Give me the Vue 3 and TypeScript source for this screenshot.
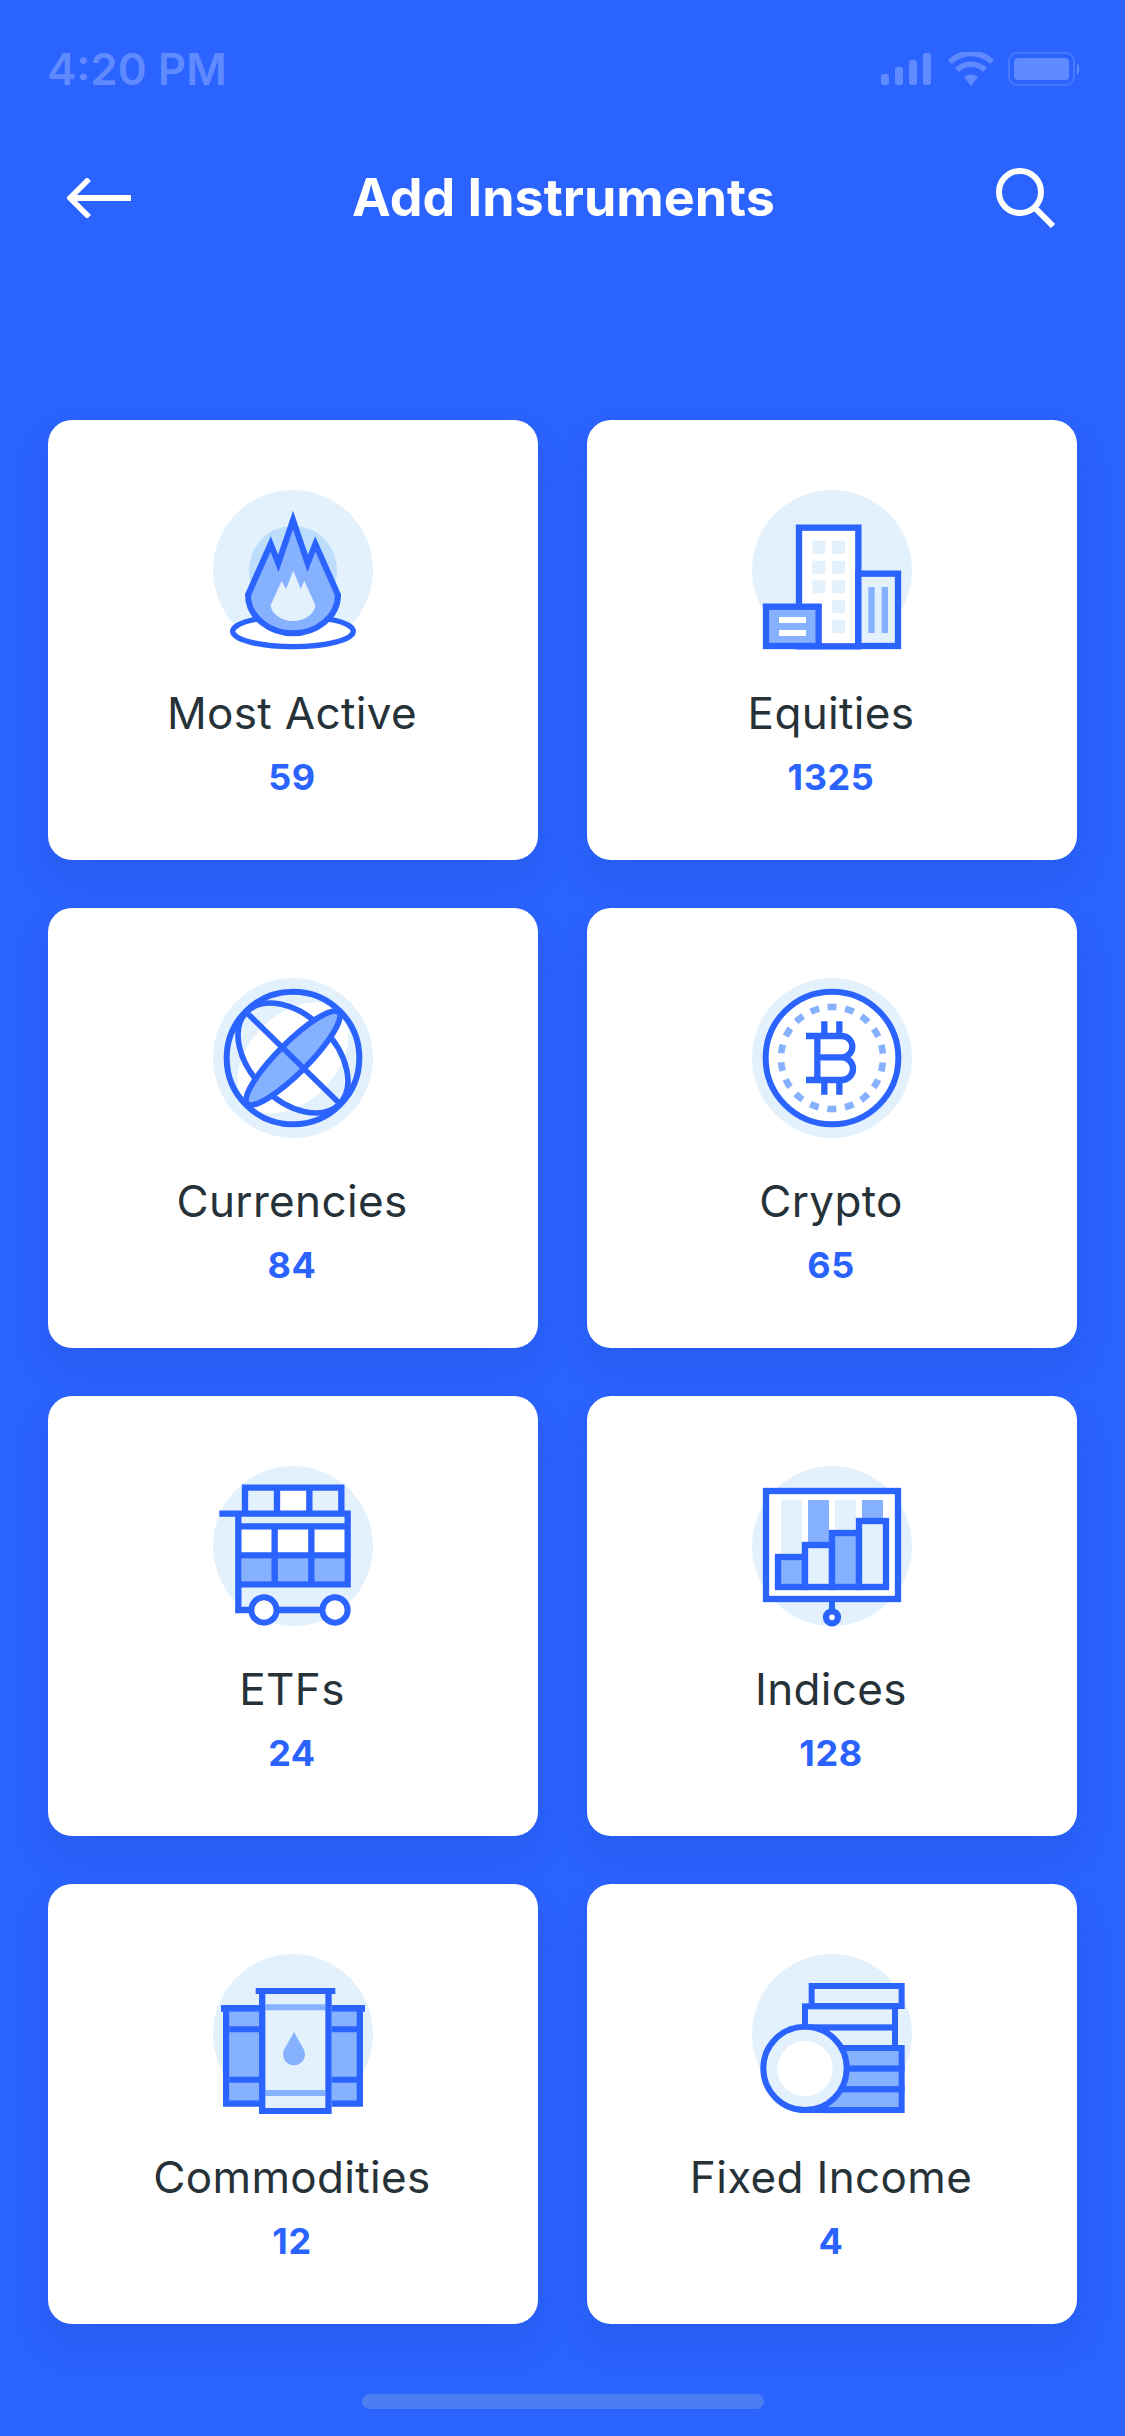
<script setup lang="ts">
interface Item {
  key: string
  name: string
  count: string
}
const items: Item[] = [
  { key: 'fire', name: 'Most Active', count: '59' },
  { key: 'city', name: 'Equities', count: '1325' },
  { key: 'globe', name: 'Currencies', count: '84' },
  { key: 'btc', name: 'Crypto', count: '65' },
  { key: 'cart', name: 'ETFs', count: '24' },
  { key: 'chart', name: 'Indices', count: '128' },
  { key: 'oil', name: 'Commodities', count: '12' },
  { key: 'coins', name: 'Fixed Income', count: '4' },
]
// Each icon is drawn in its own 600x570 space; the box is nudged per grid cell.
function viewBox(i: number): string {
  const x = i % 2 === 0 ? 9 : 6
  const y = -6 * Math.floor(i / 2)
  return `${x} ${y} 600 570`
}
</script>

<template>
  <div class="page">
    <div class="status">
      <span class="time">4:20 PM</span>
      <svg class="status-icons" width="200" height="36" viewBox="0 0 200 36">
        <g fill="#fff" fill-opacity=".25">
          <rect x="0" y="22" width="8" height="11" rx="2.5" />
          <rect x="14" y="15" width="8" height="18" rx="2.5" />
          <rect x="28" y="8" width="8" height="25" rx="2.5" />
          <rect x="42" y="1" width="8" height="32" rx="2.5" />
          <path d="M90 34 L83 25 A 11 11 0 0 1 97 25 Z" />
          <rect x="133" y="6" width="55" height="22" rx="4" />
          <path d="M196 11 C199 13 199 21 196 23 Z" />
        </g>
        <g fill="none" stroke="#fff" stroke-opacity=".25">
          <path d="M76 18 A 20 20 0 0 1 104 18" stroke-width="5.5" />
          <path d="M69 10 A 30 30 0 0 1 111 10" stroke-width="5.5" />
        </g>
        <rect x="128" y="1" width="65" height="32" rx="8" fill="none" stroke="#fff" stroke-opacity=".13" stroke-width="2" />
      </svg>
    </div>

    <div class="nav">
      <svg class="back" width="64" height="40" viewBox="0 0 64 40" fill="none" stroke="#fff">
        <path d="M64 20 H3" stroke-width="6" />
        <path d="M22 1 L3 20 L22 39" stroke-width="5.5" />
      </svg>
      <h1 class="title">Add Instruments</h1>
      <svg class="search" width="60" height="60" viewBox="0 0 60 60" fill="none" stroke="#fff">
        <circle cx="24" cy="24" r="21" stroke-width="6" />
        <path d="M39 40 L57 58" stroke-width="6" />
      </svg>
    </div>

    <div class="grid">
      <div v-for="(item, i) in items" :key="item.key" class="card">
        <svg class="icon" width="200" height="190" :viewBox="viewBox(i)">
          <g v-if="item.key === 'fire'">
            <circle class="l" cx="309" cy="300" r="240" />
            <circle cx="309" cy="300" r="132" fill="#BCDDFB" />
            <ellipse cx="309" cy="484" rx="181" ry="46" fill="#fff" stroke="#2B63FF" stroke-width="16" />
            <path class="m s" stroke-width="18" stroke-miterlimit="10" d="M309 150 L353 280 L376 222 L444 375 C444 440 380 490 309 490 C238 490 174 440 174 375 L242 222 L265 280 Z" />
            <path class="l" d="M310 302 L332 357 L343 333 L376 405 C376 430 345 453 309 453 C275 453 242 430 242 405 L275 333 L288 357 Z" />
          </g>

          <g v-else-if="item.key === 'city'">
            <circle class="l" cx="306" cy="300" r="240" />
            <rect class="s" x="207" y="173" width="178" height="356" fill="#fff" stroke-width="19" />
            <path class="l" d="M247 212h39v39h-39z M306 212h39v39h-39z M247 272h39v39h-39z M306 272h39v39h-39z M247 331h39v39h-39z M306 331h39v39h-39z M306 390h39v39h-39z M306 450h39v39h-39z" />
            <rect class="l s" x="385" y="311" width="119" height="217" stroke-width="19" />
            <path class="m" d="M415 351h19v138h-19z M455 351h19v138h-19z" />
            <rect class="m s" x="108" y="410" width="158" height="118" stroke-width="19" />
            <path fill="#fff" d="M147 441h81v18h-81z M147 480h81v18h-81z" />
          </g>

          <g v-else-if="item.key === 'globe'">
            <circle class="l" cx="309" cy="294" r="240" />
            <g transform="rotate(-45 309 294)">
              <ellipse cx="309" cy="294" rx="196" ry="130" fill="#fff" />
            </g>
            <circle cx="309" cy="294" r="199" fill="none" stroke="#2B63FF" stroke-width="18" />
            <ellipse class="s" cx="309" cy="294" rx="196" ry="126" fill="none" stroke-width="17" transform="rotate(45 309 294)" />
            <ellipse class="m s" cx="309" cy="294" rx="194" ry="46" stroke-width="17" transform="rotate(-45 309 294)" />
            <path class="s" fill="none" stroke-width="17" d="M168 156 L448 430" />
          </g>

          <g v-else-if="item.key === 'btc'">
            <circle class="l" cx="306" cy="294" r="240" />
            <circle class="s" cx="306" cy="294" r="199" fill="#fff" stroke-width="18" />
            <circle cx="306" cy="294" r="153" fill="none" stroke="#85B1FF" stroke-width="20" pathLength="360" stroke-dasharray="10 10" transform="rotate(-95 306 294)" />
            <path class="s" fill="none" stroke-width="19" d="M228 228 H335 A32 32 0 0 1 335 292 H262 M262 292 H335 A34 34 0 0 1 335 360 H228 M262 228 V360 M283 184 V228 M328 184 V228 M283 360 V404 M328 360 V404" />
          </g>

          <g v-else-if="item.key === 'cart'">
            <circle class="l" cx="309" cy="288" r="240" />
            <path fill="#fff" d="M270 122h80v62h-80z M154 238h310v69h-310z" />
            <path class="m" d="M154 325h310v69h-310z" />
            <path class="s" fill="none" stroke-width="19" d="M165 191 V113 H454 V191 M261 113 V191 M358 113 V191 M88 191 H473 V403 H145 V191 M145 229 H473 M145 316 H473 M254 229 V403 M364 229 V403 M145 403 V480 H180 M260 480 H395" />
            <circle class="s" cx="222" cy="480" r="38" fill="#fff" stroke-width="18" />
            <circle class="s" cx="435" cy="480" r="38" fill="#fff" stroke-width="18" />
          </g>

          <g v-else-if="item.key === 'chart'">
            <circle class="l" cx="306" cy="288" r="240" />
            <rect class="s" x="108" y="123" width="396" height="324" fill="#fff" stroke-width="19" />
            <path class="l" d="M153 150h63v170h-63z M315 150h63v100h-63z" />
            <path class="m" d="M234 150h63v140h-63z M396 150h63v70h-63z" />
            <rect class="m s" x="144" y="321" width="81" height="90" stroke-width="19" />
            <rect class="l s" x="225" y="285" width="81" height="126" stroke-width="19" />
            <rect class="m s" x="306" y="249" width="81" height="162" stroke-width="19" />
            <rect class="l s" x="387" y="213" width="81" height="198" stroke-width="19" />
            <path class="s" fill="none" stroke-width="18" d="M306 456 V480" />
            <circle class="s" cx="306" cy="502" r="18" fill="#fff" stroke-width="19" />
          </g>

          <g v-else-if="item.key === 'oil'">
            <circle class="l" cx="309" cy="282" r="240" />
            <path class="m" d="M118 215h90v266h-90z M425 215h76v266h-76z" />
            <path class="d" d="M93 195h114v20h-89v266h89v19h-108v-285h-6z" />
            <path class="d" d="M118 259h90v18h-90z M118 410h90v18h-90z" />
            <path class="d" d="M425 195h100v20h-6v285h-94v-19h75v-266h-75z" />
            <path class="d" d="M425 259h76v18h-76z M425 410h76v18h-76z" />
            <path class="l" d="M226 162h180v342h-180z" />
            <path class="m" d="M226 193h180v18h-180z M226 450h180v18h-180z" />
            <path class="m" d="M312 276 L342 329 A33 33 0 1 1 282 329 Z" />
            <path class="d" d="M197 144h239v18h-11v360h-218v-360h-10z M226 162v342h180v-342z" fill-rule="evenodd" />
          </g>

          <g v-else>
            <circle class="l" cx="306" cy="282" r="240" />
            <rect class="l s" x="225" y="262" width="270" height="62" stroke-width="18" />
            <rect class="l s" x="225" y="199" width="270" height="63" stroke-width="18" />
            <rect class="l s" x="245" y="138" width="270" height="60" stroke-width="18" />
            <rect class="m s" x="225" y="324" width="290" height="62" stroke-width="18" />
            <rect class="m s" x="225" y="386" width="290" height="62" stroke-width="18" />
            <rect class="m s" x="225" y="448" width="290" height="62" stroke-width="18" />
            <circle class="l s" cx="225" cy="385" r="125" stroke-width="18" />
            <circle cx="225" cy="386" r="83" fill="#fff" />
          </g>
        </svg>
        <div class="name">{{ item.name }}</div>
        <div class="count">{{ item.count }}</div>
      </div>
    </div>

    <div class="home"></div>
  </div>
</template>

<style scoped>
.page {
  position: relative;
  width: 1125px;
  height: 2436px;
  background: #2b63ff;
  font-family: Inter, "Liberation Sans", sans-serif;
  display: flex;
  flex-direction: column;
  overflow: hidden;
}
.status {
  height: 132px;
  padding: 47px 44px 0 47px;
  box-sizing: border-box;
  display: flex;
  justify-content: space-between;
  align-items: flex-start;
}
.time {
  font-size: 44px;
  line-height: 44px;
  font-weight: 600;
  color: rgba(255, 255, 255, 0.25);
}
.status-icons {
  margin-top: 5px;
}
.nav {
  height: 132px;
  padding: 0 69px 0 67px;
  display: flex;
  align-items: center;
}
.title {
  flex: 1;
  margin: 0;
  text-align: center;
  color: #fff;
  font-size: 52px;
  line-height: 60px;
  font-weight: 700;
}
.grid {
  margin-top: 156px;
  padding: 0 48px;
  display: grid;
  grid-template-columns: 490px 490px;
  column-gap: 49px;
  row-gap: 48px;
}
.card {
  height: 440px;
  background: #fff;
  border-radius: 24px;
  padding-top: 50px;
  box-sizing: border-box;
  display: flex;
  flex-direction: column;
  align-items: center;
  box-shadow: 0 20px 40px rgba(20, 30, 90, 0.1);
}
.icon {
  display: block;
  flex: none;
}
.l {
  fill: #e3f1fd;
}
.m {
  fill: #85b1ff;
}
.d {
  fill: #2b63ff;
}
.s {
  stroke: #2b63ff;
}
.name {
  margin-top: 25px;
  padding-right: 2px;
  font-size: 44px;
  line-height: 56px;
  font-weight: 400;
  letter-spacing: 0.35px;
  color: #263238;
}
.count {
  margin-top: 15px;
  padding-right: 2px;
  font-size: 36px;
  line-height: 42px;
  font-weight: 700;
  letter-spacing: 0.6px;
  color: #2b63ff;
}
.home {
  position: absolute;
  left: 362px;
  top: 2394px;
  width: 402px;
  height: 15px;
  border-radius: 8px;
  background: #4d7df2;
}
</style>
